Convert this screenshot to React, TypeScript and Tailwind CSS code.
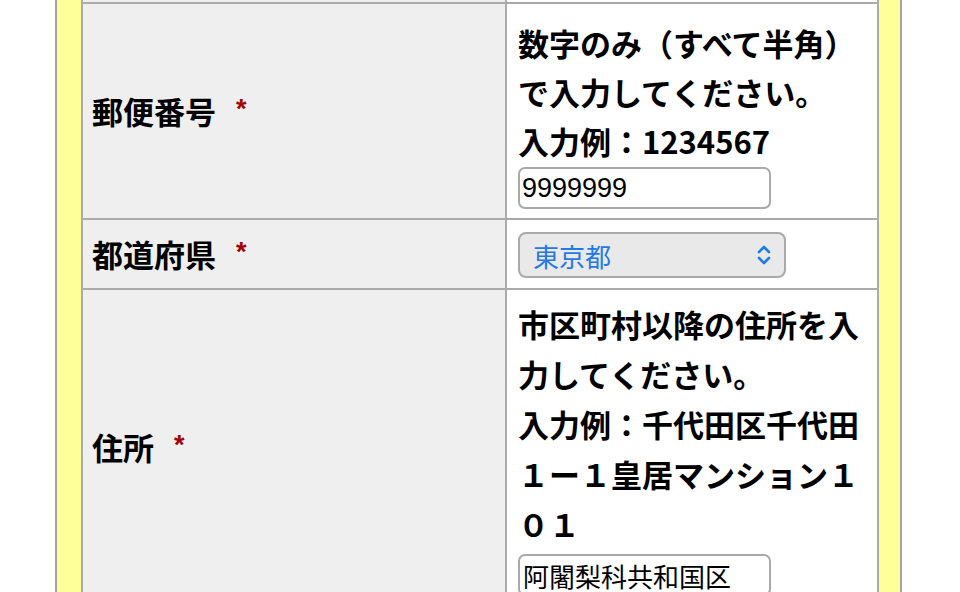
import React from 'react';

const jp = { fontFamily: '"Noto Sans CJK JP", "Noto Sans", sans-serif' };

function Label({ text }: { text: string }) {
  return (
    <div className="w-[424px] shrink-0 bg-[#efefef] border-r-2 border-[#ababab] flex items-center pl-[9px]">
      <span className="text-[31px] font-bold text-black" style={jp}>
        {text}
      </span>
      <span
        className="ml-[20px] text-[27px] font-bold text-[#a30000] -mt-[4px]"
        style={{ fontFamily: '"Liberation Sans", Arial, sans-serif' }}
      >
        *
      </span>
    </div>
  );
}

function Chevrons() {
  return (
    <svg width="14" height="22" viewBox="0 0 14 22" fill="none" stroke="#1f7be6" strokeWidth="2.6" strokeLinecap="round" strokeLinejoin="round">
      <path d="M2 8 L7 3 L12 8" />
      <path d="M2 14 L7 19 L12 14" />
    </svg>
  );
}

export default function App() {
  return (
    <div className="h-[592px] overflow-hidden bg-white">
      <div className="ml-[55px] w-[847px] border-x-2 border-[#a4a4a4] bg-[#ffff99] pl-[24px] pr-[21px]">
        <div className="w-[798px] border-x-2 border-[#ababab]">
          {/* tail of the previous row */}
          <div className="flex h-[4px] border-b-2 border-[#ababab]">
            <div className="w-[424px] bg-[#efefef] border-r-2 border-[#ababab]" />
            <div className="flex-1 bg-white" />
          </div>

          {/* 郵便番号 */}
          <div className="flex border-b-2 border-[#ababab]">
            <Label text="郵便番号" />
            <div className="flex-1 bg-white pl-[11px] pr-[10px] pt-[14px] pb-[9px]">
              <p className="text-[31px] leading-[49px] font-bold text-black" style={jp}>
                数字のみ（すべて半角）で入力してください。
              </p>
              <p className="text-[31px] leading-[49px] font-bold text-black" style={jp}>
                入力例：1234567
              </p>
              <div
                className="mt-[2px] w-[253px] h-[42px] border-2 border-[#a9a9a9] rounded-[7px] bg-white flex items-center pl-[2px] text-[27px] text-black"
                style={{ fontFamily: '"Liberation Sans", Arial, sans-serif' }}
              >
                9999999
              </div>
            </div>
          </div>

          {/* 都道府県 */}
          <div className="flex border-b-2 border-[#ababab]">
            <Label text="都道府県" />
            <div className="flex-1 bg-white pl-[11px] pt-[12px] pb-[10px]">
              <div className="w-[268px] h-[46px] border-2 border-[#a9a9a9] rounded-[8px] bg-[#e9e9e9] flex items-center justify-between pl-[13px] pr-[13px]">
                <span className="text-[26px] text-[#2479e3]" style={jp}>
                  東京都
                </span>
                <Chevrons />
              </div>
            </div>
          </div>

          {/* 住所 */}
          <div className="flex border-b-2 border-[#ababab]">
            <Label text="住所" />
            <div className="flex-1 bg-white pl-[11px] pr-[10px] pt-[9px] pb-[9px]">
              <p className="text-[31px] leading-[50px] font-bold text-black" style={jp}>
                市区町村以降の住所を入力してください。
              </p>
              <p className="text-[31px] leading-[50px] font-bold text-black" style={jp}>
                入力例：千代田区千代田１ー１皇居マンション１０１
              </p>
              <div
                className="mt-[5px] w-[253px] h-[42px] border-2 border-[#a9a9a9] rounded-[7px] bg-white flex items-center pl-[3px] text-[26px] text-black"
                style={jp}
              >
                阿闍梨科共和国区
              </div>
            </div>
          </div>
        </div>
      </div>
    </div>
  );
}
